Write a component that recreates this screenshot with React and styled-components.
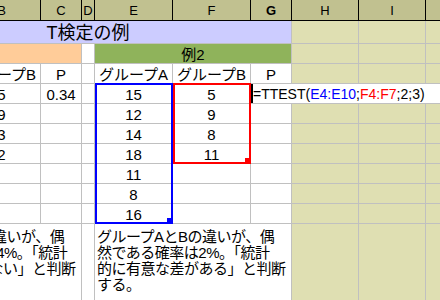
import React from 'react';
import styled, { createGlobalStyle } from 'styled-components';

const KHAKI = '#dfdfb2';
const HEAD = '#c1c190';
const LAV = '#ccccff';
const ORANGE = '#ffcc99';
const GREEN = '#8fb35b';
const GRID = '#c0c0c0';

const GlobalStyle = createGlobalStyle`
html, body {
    margin: 0;
    padding: 0;
    background: #fff;
    overflow: hidden;
}
`;

// A..J, A is scrolled mostly out of view
const COLS = [78, 78, 41, 13, 78, 78, 41, 67, 67, 67];

const Sheet = styled.div`
display: grid;
grid-template-columns: ${COLS.map(w => w + 'px').join(' ')};
grid-template-rows: 21px 23px repeat(9, 20px) 90px;
margin-left: -115px;
width: max-content;
font-family: "Liberation Sans", "Noto Sans CJK JP", sans-serif;
font-size: 15px;
color: #000;
`;

const HeadCell = styled.div`
grid-row: 1;
grid-column: ${p => p.$col};
box-sizing: border-box;
background: ${HEAD};
border-right: 1px solid #000;
border-bottom: 1px solid #000;
display: flex;
align-items: center;
justify-content: center;
font-size: 13px;
font-weight: ${p => (p.$active ? 700 : 400)};
`;

const Cell = styled.div`
grid-row: ${p => p.$row};
grid-column: ${p => p.$col} / span ${p => p.$span};
box-sizing: border-box;
background: ${p => p.$bg || '#fff'};
border-right: 1px solid ${GRID};
border-bottom: 1px solid ${GRID};
display: flex;
align-items: center;
justify-content: center;
padding-top: 1px;
white-space: nowrap;
overflow: hidden;
font-size: ${p => (p.$title ? '18px' : '15px')};
line-height: 1;
`;

const NoteCell = styled(Cell)`
flex-direction: column;
align-items: flex-start;
justify-content: flex-start;
padding: 5px 0 0 2px;
line-height: 16px;
letter-spacing: -0.5px;
`;

const NoteLine = styled.div`
white-space: nowrap;
`;

const EditCell = styled(Cell)`
justify-content: flex-start;
align-items: stretch;
border-right: none;
padding: 0;
font-size: 14px;
overflow: visible;
`;

const Caret = styled.span`
width: 2px;
background: #000;
flex: none;
`;

const FormulaText = styled.span`
display: flex;
align-items: center;
padding-top: 1px;
`;

const Ref = styled.span`
color: ${p => p.$color};
`;

const Range = styled.div`
grid-column: ${p => p.$col};
grid-row: ${p => p.$rows};
margin-top: -1px;
box-sizing: border-box;
border: 2px solid ${p => p.$color};
position: relative;
pointer-events: none;
`;

const Handle = styled.div`
position: absolute;
right: -2px;
bottom: -2px;
width: 6px;
height: 6px;
background: ${p => p.$color};
`;

const K = { bg: KHAKI };

const colA = ['10', '14', '11', '13', '', '', ''];
const colB = ['5', '9', '3', '2', '', '', ''];
const colE = ['15', '12', '14', '18', '11', '8', '16'];
const colF = ['5', '9', '8', '11', '', '', ''];

const leftNote = [
    'グループAとBの違いが、偶',
    '然である確率は34%。「統計',
    '的に有意な差はない」と判断',
    'する。',
];
const rightNote = [
    'グループAとBの違いが、偶',
    '然である確率は2%。「統計',
    '的に有意な差がある」と判断',
    'する。',
];

const rows = [
    [{ span: 7, bg: LAV, text: 'T検定の例', title: true }, K, K, K],
    [{ span: 3, bg: ORANGE, text: '例1' }, {}, { span: 3, bg: GREEN, text: '例2' }, K, K, K],
    [
        { text: 'グループA' }, { text: 'グループB' }, { text: 'P' }, {},
        { text: 'グループA' }, { text: 'グループB' }, { text: 'P' }, K, K, K,
    ],
    ...colE.map((e, i) => {
        const row = [
            { text: colA[i] }, { text: colB[i] }, { text: i === 0 ? '0.34' : '' }, {},
            { text: e }, { text: colF[i] },
        ];
        return i === 0 ? [...row, { kind: 'edit', span: 4 }] : [...row, {}, K, K, K];
    }),
    [{ span: 3, kind: 'note', lines: leftNote }, {}, { span: 3, kind: 'note', lines: rightNote }, K, K, K],
];

const App = () => {
    return (
        <>
            <GlobalStyle />
            <Sheet>
                {['A', 'B', 'C', 'D', 'E', 'F', 'G', 'H', 'I', 'J'].map((h, i) => (
                    <HeadCell key={h} $col={i + 1} $active={h === 'G'}>{h}</HeadCell>
                ))}
                {rows.map((row, ri) => {
                    let col = 1;
                    return row.map((c, ci) => {
                        const span = c.span || 1;
                        const pos = { $row: ri + 2, $col: col, $span: span };
                        col += span;
                        const key = ri + '-' + ci;
                        if (c.kind === 'edit') {
                            return (
                                <EditCell key={key} {...pos}>
                                    <Caret />
                                    <FormulaText>
                                        =TTEST(<Ref $color="#0000ff">E4:E10</Ref>;<Ref $color="#ff0000">F4:F7</Ref>;2;3)
                                    </FormulaText>
                                </EditCell>
                            );
                        }
                        if (c.kind === 'note') {
                            return (
                                <NoteCell key={key} {...pos}>
                                    {c.lines.map(l => <NoteLine key={l}>{l}</NoteLine>)}
                                </NoteCell>
                            );
                        }
                        return (
                            <Cell key={key} {...pos} $bg={c.bg} $title={c.title}>{c.text}</Cell>
                        );
                    });
                })}
                <Range $color="#0000ff" $col="5" $rows="5 / 12">
                    <Handle $color="#0000ff" />
                </Range>
                <Range $color="#ff0000" $col="6" $rows="5 / 9">
                    <Handle $color="#ff0000" />
                </Range>
            </Sheet>
        </>
    );
};

export default App;
